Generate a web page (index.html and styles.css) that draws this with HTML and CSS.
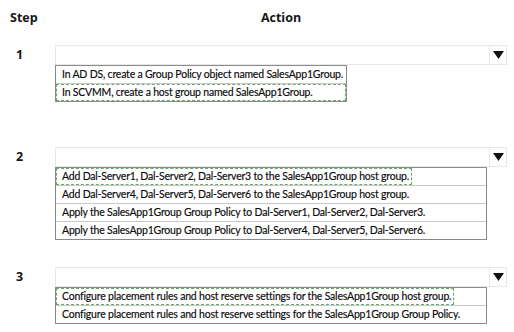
FILE: index.html
```html
<!DOCTYPE html>
<html>
<head>
<meta charset="utf-8">
<link rel="stylesheet" href="styles.css">
</head>
<body>
<div class="page">
  <div class="head">
    <div class="h-step">Step</div>
    <div class="h-action">Action</div>
  </div>

  <div class="step s1">
    <div class="num">1</div>
    <div class="body">
      <div class="select"><div class="field"></div><div class="arrow"><svg width="11" height="8" viewBox="0 0 11 8"><polygon points="0,0 11,0 5.5,8" fill="#111"/></svg></div></div>
      <div class="list fit">
        <div class="row"><span class="t">In AD DS, create a Group Policy object named SalesApp1Group.</span></div>
        <div class="row focus"><span class="t full">In SCVMM, create a host group named SalesApp1Group.</span></div>
      </div>
    </div>
  </div>

  <div class="step s2">
    <div class="num">2</div>
    <div class="body">
      <div class="select"><div class="field"></div><div class="arrow"><svg width="11" height="8" viewBox="0 0 11 8"><polygon points="0,0 11,0 5.5,8" fill="#111"/></svg></div></div>
      <div class="list wide">
        <div class="row focus"><span class="t">Add Dal-Server1, Dal-Server2, Dal-Server3 to the SalesApp1Group host group.</span></div>
        <div class="row"><span class="t">Add Dal-Server4, Dal-Server5, Dal-Server6 to the SalesApp1Group host group.</span></div>
        <div class="row"><span class="t">Apply the SalesApp1Group Group Policy to Dal-Server1, Dal-Server2, Dal-Server3.</span></div>
        <div class="row"><span class="t">Apply the SalesApp1Group Group Policy to Dal-Server4, Dal-Server5, Dal-Server6.</span></div>
      </div>
    </div>
  </div>

  <div class="step s3">
    <div class="num">3</div>
    <div class="body">
      <div class="select"><div class="field"></div><div class="arrow"><svg width="11" height="8" viewBox="0 0 11 8"><polygon points="0,0 11,0 5.5,8" fill="#111"/></svg></div></div>
      <div class="list wide">
        <div class="row focus"><span class="t">Configure placement rules and host reserve settings for the SalesApp1Group host group.</span></div>
        <div class="row"><span class="t">Configure placement rules and host reserve settings for the SalesApp1Group Group Policy.</span></div>
      </div>
    </div>
  </div>
</div>
</body>
</html>
```

FILE: styles.css
```css
html, body {
  margin: 0;
  padding: 0;
  background: #ffffff;
}

body {
  font-family: "Open Sans", "Liberation Sans", sans-serif;
  color: #161616;
}

.page {
  width: 514px;
  height: 332px;
  overflow: hidden;
}

.head {
  display: grid;
  grid-template-columns: 55px 452px;
  padding-top: 8px;
  height: 20px;
  font-weight: bold;
  font-size: 12.5px;
  line-height: 20px;
}

.h-step {
  padding-left: 10px;
}

.h-action {
  text-align: center;
}

.step {
  display: grid;
  grid-template-columns: 55px 452px;
}

.s1 { margin-top: 17px; }
.s2 { margin-top: 45px; }
.s3 { margin-top: 27px; }

.num {
  height: 20px;
  line-height: 20px;
  padding-left: 16px;
  font-weight: bold;
  font-size: 12.5px;
}

.select {
  display: flex;
  height: 18px;
  border: 1px solid #e8e8e8;
}

.field {
  flex: 1;
}

.arrow {
  width: 16px;
  border-left: 1px solid #e8e8e8;
  display: flex;
  align-items: center;
  justify-content: center;
}

.list {
  border: 1px solid #8a8a8a;
  font-family: Lato, "Liberation Sans", sans-serif;
  font-size: 10.5px;
  letter-spacing: -0.2px;
  line-height: 16px;
  color: #0a0a0a;
  -webkit-text-stroke: 0.15px #0a0a0a;
  background: #fff;
}

.list.fit {
  width: 290px;
}

.list.wide {
  width: 430px;
}

.row {
  height: 17px;
  border-bottom: 1px solid #c8c8c8;
  white-space: nowrap;
}

.row:last-child {
  border-bottom: none;
}

.t {
  display: inline-block;
  height: 17px;
  line-height: 17px;
  padding: 0 3px 0 6px;
  box-sizing: border-box;
}

.t.full {
  display: block;
}

.focus .t {
  outline: 1px dashed #6aa86a;
  outline-offset: -1px;
}
```
